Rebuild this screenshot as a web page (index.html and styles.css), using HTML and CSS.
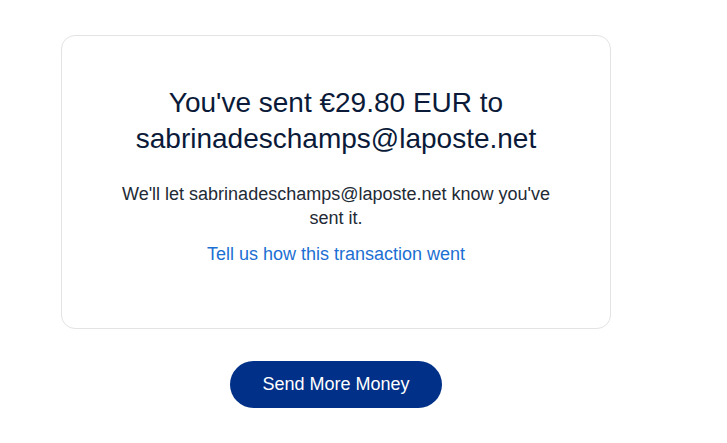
FILE: index.html
```html
<!DOCTYPE html>
<html>
<head>
<meta charset="utf-8">
<link rel="stylesheet" href="styles.css">
</head>
<body>
<div class="page">
  <div class="card">
    <h1 class="title">You've sent €29.80 EUR to sabrinadeschamps@laposte.net</h1>
    <p class="note">We'll let sabrinadeschamps@laposte.net know you've sent it.</p>
    <a class="link" href="#">Tell us how this transaction went</a>
  </div>
  <div class="actions">
    <button class="btn">Send More Money</button>
  </div>
</div>
</body>
</html>
```

FILE: styles.css
```css
html, body {
  margin: 0;
  padding: 0;
  background: #ffffff;
  font-family: "Liberation Sans", Arial, sans-serif;
}
.page {
  padding: 35px 0 0 61px;
  width: 550px;
}
.card {
  box-sizing: border-box;
  width: 550px;
  height: 294px;
  border: 1px solid #e3e3e3;
  border-radius: 14px;
  padding: 49px 48px 0;
  display: flex;
  flex-direction: column;
  align-items: center;
  text-align: center;
}
.title {
  margin: 0;
  font-size: 28px;
  line-height: 36px;
  font-weight: 400;
  color: #0a1a38;
}
.note {
  margin: 25px 0 0;
  font-size: 18px;
  line-height: 24px;
  color: #222a35;
}
.link {
  margin-top: 12px;
  font-size: 18px;
  line-height: 24px;
  color: #1c6fd3;
  text-decoration: none;
}
.actions {
  display: flex;
  justify-content: center;
  margin-top: 32px;
}
.btn {
  width: 212px;
  height: 47px;
  border: none;
  border-radius: 24px;
  background: #003087;
  color: #ffffff;
  font-family: "Liberation Sans", Arial, sans-serif;
  font-size: 18px;
  padding: 0;
}
```
